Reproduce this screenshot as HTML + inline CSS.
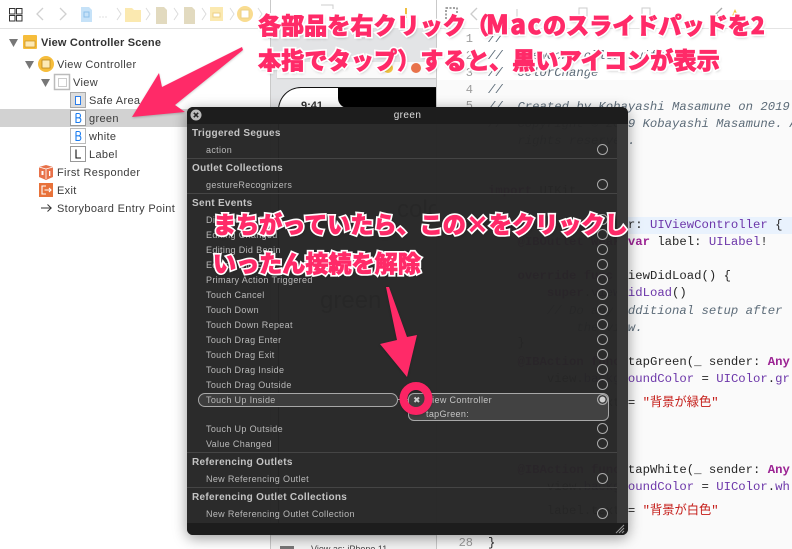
<!DOCTYPE html>
<html><head><meta charset="utf-8">
<style>
html,body{margin:0;padding:0;background:#fff}
#r{position:relative;width:792px;height:549px;overflow:hidden;background:#fff;font-family:"Liberation Sans","Noto Sans CJK JP",sans-serif}
.a{position:absolute;white-space:pre}
.t{position:absolute;white-space:pre;font-size:11px;letter-spacing:.34px;color:#3c3c3c;line-height:14px}
.c{position:absolute;white-space:pre;font-family:"Liberation Mono","Noto Sans CJK JP",monospace;font-size:12.28px;line-height:16px;color:#262626;left:488px}
.n{position:absolute;font-family:"Liberation Mono",monospace;font-size:12px;line-height:16px;color:#9c9c9c;right:319px;text-align:right}
.cm{color:#5d6c79;font-style:italic}.p{color:#6c36a9}.k{color:#9b2393;font-weight:bold}.s{color:#c41a16}
.h{position:absolute;left:5px;font-size:10px;font-weight:bold;letter-spacing:.3px;color:#c4c4c4;line-height:12px;white-space:pre}
.i{position:absolute;left:19px;font-size:9px;letter-spacing:.34px;color:#b9b9b9;line-height:12px;white-space:pre}
.d{position:absolute;left:0;width:430px;height:1px;background:#454545}
.o{position:absolute;left:410px;width:9px;height:9px;border:1.3px solid #aaa;border-radius:50%}
.j,.w{position:absolute;white-space:pre;font-family:"Noto Sans CJK JP",sans-serif;font-weight:900;font-size:23.1px;line-height:30px}
.w{color:#fff;-webkit-text-stroke:4px #fff;text-shadow:1px 2px 3px rgba(0,0,0,.28)}
.j{color:#ff2a68;-webkit-text-stroke:.7px #ff2a68}
.m{font-size:26px;letter-spacing:1.5px;margin-left:-3px}
</style></head><body><div id="r">

<!-- left panel -->
<div class="a" style="left:0;top:28px;width:270px;height:521px;background:#fff"></div>
<div class="a" style="left:0;top:28px;width:270px;height:1px;background:#e2e2e2"></div>
<div class="a" style="left:0;top:109px;width:190px;height:18px;background:#d2d2d2"></div>
<div class="a" style="left:270px;top:0;width:1px;height:549px;background:#c9c9c9"></div>

<svg class="a" style="left:0;top:0" width="270" height="225" viewBox="0 0 270 225">
 <g fill="none" stroke="#333" stroke-width="1"><rect x="9.500" y="8.500" width="5.500" height="5.500"/><rect x="16.500" y="8.500" width="5.500" height="5.500"/><rect x="9.500" y="15.500" width="5.500" height="5.500"/><rect x="16.500" y="15.500" width="5.500" height="5.500"/></g>
 <g fill="none" stroke="#d0d0d0" stroke-width="1.300"><path d="M43 8l-6 6 6 6M60 8l6 6-6 6"/></g>
 <path d="M81 7h8l3 3v12H81z" fill="#c6e2f8"/><rect x="84" y="12" width="5" height="5" fill="none" stroke="#8cc0ea"/>
 <g fill="#ccc"><circle cx="100" cy="17" r=".6"/><circle cx="103" cy="17" r=".6"/><circle cx="106" cy="17" r=".6"/></g>
 <g fill="none" stroke="#dcdcdc" stroke-width="1"><path d="M117 8l4 6-4 6M146 8l4 6-4 6M174 8l4 6-4 6M202 8l4 6-4 6M230 8l4 6-4 6M258 8l4 6-4 6"/></g>
 <path d="M125 8h7l2 2h7v12h-16z" fill="#fbe9b0"/>
 <path d="M156 7h8l3 3v14h-11z" fill="#e2dabf"/><path d="M184 7h8l3 3v14h-11z" fill="#e2dabf"/>
 <rect x="210" y="7" width="13" height="14" fill="#fbe9b0"/><rect x="213" y="13" width="7" height="4" fill="#fff" stroke="#ecd084"/>
 <circle cx="245" cy="14" r="8" fill="#f9dc90"/><rect x="241" y="10" width="8" height="8" fill="#fff" stroke="#ecd084"/>
 <g fill="#777"><path d="M9 39h9l-4.500 8zM25 61h9l-4.500 8zM41 79h9l-4.500 8z"/></g>
 <rect x="23" y="35" width="14" height="14" rx="1" fill="#f6bd3b"/><rect x="25" y="41" width="10" height="6" fill="#fde9b4" stroke="#c98f1d" stroke-width=".7"/>
 <circle cx="46" cy="64" r="8" fill="#f6bd3b"/><rect x="42" y="60" width="8" height="8" fill="#fde9b4" stroke="#b9861d" stroke-width=".8"/>
 <rect x="54.500" y="74.500" width="15" height="15" fill="#fff" stroke="#bbb" stroke-width="1.500"/><rect x="58.500" y="78.500" width="8" height="8" fill="#fff" stroke="#aaa" stroke-width=".6"/>
 <rect x="70.500" y="92.500" width="15" height="15" fill="#ddd" stroke="#aaa"/><rect x="75.500" y="96.500" width="5" height="8" fill="#fff" stroke="#2b7de9"/>
 <rect x="70.500" y="110.500" width="15" height="15" fill="#fff" stroke="#999"/>
 <rect x="70.500" y="128.500" width="15" height="15" fill="#fff" stroke="#bbb"/>
 <rect x="70.500" y="146.500" width="15" height="15" fill="#fff" stroke="#999"/>
 <path d="M76 113.500v9h2.600c3 0 3-4.700 0-4.700H76m2.600 0c2.500 0 2.500-4.300 0-4.300H76M76 131.500v9h2.600c3 0 3-4.700 0-4.700H76m2.600 0c2.500 0 2.500-4.300 0-4.300H76" fill="none" stroke="#1a7cf0" stroke-width="1.100"/>
 <path d="M76 149.500v8.500h5" fill="none" stroke="#111" stroke-width="1.100"/>
 <path d="M39 167l7-2 7 2v10l-7 3-7-3z" fill="#e8724a"/><path d="M46 169v10M39 167l7 2 7-2" stroke="#fff" fill="none" stroke-width=".8"/><rect x="49" y="171" width="1.300" height="5" fill="#fff"/><rect x="41.500" y="171" width="2" height="4" fill="#fff"/>
 <rect x="39" y="183" width="14" height="14" fill="#e8723a"/><path d="M46 186h-4v8h4M44.500 190h6.500M49 188l2 2-2 2" fill="none" stroke="#fff" stroke-width="1.100"/>
 <path d="M41 208h10M47.500 204.500l3.700 3.500-3.700 3.500" fill="none" stroke="#333" stroke-width="1"/>
</svg>

<div class="t" style="left:41px;top:36px;font-weight:bold;letter-spacing:.2px;color:#333">View Controller Scene</div>
<div class="t" style="left:57px;top:58px">View Controller</div>
<div class="t" style="left:73px;top:76px">View</div>
<div class="t" style="left:89px;top:94px">Safe Area</div>
<div class="t" style="left:89px;top:112px">green</div>
<div class="t" style="left:89px;top:130px">white</div>
<div class="t" style="left:89px;top:148px">Label</div>
<div class="t" style="left:57px;top:166px">First Responder</div>
<div class="t" style="left:57px;top:184px">Exit</div>
<div class="t" style="left:57px;top:202px">Storyboard Entry Point</div>

<!-- canvas -->
<div class="a" style="left:271px;top:28px;width:165px;height:521px;background:#e3e4e6"></div>
<div class="a" style="left:271px;top:0;width:165px;height:28px;background:#fff"></div>
<svg class="a" style="left:271px;top:0" width="165" height="28" viewBox="0 0 165 28">
 <path d="M50 5h12v4" fill="none" stroke="#ccc"/>
 <path d="M135 8v10" stroke="#f0c040" stroke-width="2"/>
</svg>
<div class="a" style="left:277px;top:62px;width:159px;height:16px;background:#fafafa;box-shadow:0 1px 1px #ccc"></div>
<div class="a" style="left:279px;top:88px;width:157px;height:440px;background:#fff;border-radius:22px 0 0 0;box-shadow:0 0 0 1px #111"></div>
<div class="a" style="left:338px;top:88px;width:98px;height:20px;background:#000;border-radius:0 0 0 10px"></div>
<div class="a" style="left:301px;top:100px;font-size:11px;font-weight:bold;color:#333;line-height:13px">9:41</div>
<div class="a" style="left:383px;top:63px;width:10px;height:10px;border-radius:50%;background:#f4c542"></div>
<div class="a" style="left:411px;top:63px;width:10px;height:10px;border-radius:50%;background:#e8724a"></div>
<div class="a" style="left:397px;top:196px;font-size:24px;color:#555;line-height:28px">colorChange</div>
<div class="a" style="left:320px;top:287px;font-size:24px;color:#555;line-height:28px">green</div>
<div class="a" style="left:271px;top:536px;width:165px;height:13px;background:#f4f4f4"></div>
<div class="a" style="left:280px;top:546px;width:14px;height:3px;background:#777"></div>
<div class="a" style="left:311px;top:544px;font-size:9px;color:#444;line-height:10px">View as: iPhone 11</div>
<div class="a" style="left:436px;top:0;width:1px;height:549px;background:#c9c9c9"></div>

<!-- code -->
<div class="a" style="left:437px;top:0;width:355px;height:80px;background:#fff"></div>
<div class="a" style="left:437px;top:80px;width:355px;height:469px;background:#fafafa"></div>
<div class="a" style="left:437px;top:217px;width:355px;height:17px;background:#e9f2fd"></div>
<svg class="a" style="left:437px;top:0" width="355" height="28" viewBox="0 0 355 28">
 <path d="M9 8h11v12H9z" fill="none" stroke="#444" stroke-dasharray="2 1.500"/>
 <path d="M40 8l-6 6 6 6" fill="none" stroke="#ccc" stroke-width="1.300"/>
 <path d="M80 9v10M142 8h8v11h-8zM205 8h8v11h-8z" fill="none" stroke="#ccc"/>
 <path d="M285 8l-6 6 6 6" fill="none" stroke="#aaa" stroke-width="1.300"/>
 <path d="M298 9l4 9h-8z" fill="#f4c542"/>
</svg>
<div class="a" style="left:437px;top:28px;width:355px;height:1px;background:#e4e4e4"></div>

<div class="n" style="top:31px">1</div><div class="n" style="top:48px">2</div><div class="n" style="top:65px">3</div><div class="n" style="top:82px">4</div><div class="n" style="top:98px">5</div>
<div class="n" style="top:535px">28</div>

<div class="c cm" style="top:31px">//</div>
<div class="c cm" style="top:48px">//  ViewController.swift</div>
<div class="c cm" style="top:65px">//  colorChange</div>
<div class="c cm" style="top:82px">//</div>
<div class="c cm" style="top:99px">//  Created by Kobayashi Masamune on 2019</div>
<div class="c cm" style="top:116px">//  Copyright © 2019 Kobayashi Masamune. All</div>
<div class="c cm" style="top:133px">    rights reserved.</div>
<div class="c" style="top:183px"><span class="k">import</span> UIKit</div>
<div class="c" style="top:217px"><span class="k">class</span> ViewController: <span class="p">UIViewController</span> {</div>
<div class="c" style="top:234px">    <span class="k">@IBOutlet weak var</span> label: <span class="p">UILabel</span>!</div>
<div class="c" style="top:268px">    <span class="k">override func</span> viewDidLoad() {</div>
<div class="c" style="top:285px">        <span class="k">super</span>.<span class="p">viewDidLoad</span>()</div>
<div class="c cm" style="top:303px">        // Do any additional setup after</div>
<div class="c cm" style="top:320px">            the view.</div>
<div class="c" style="top:335px">    }</div>
<div class="c" style="top:354px">    <span class="k">@IBAction func</span> tapGreen(_ sender: <span class="k">Any</span></div>
<div class="c" style="top:371px">        view.<span class="p">backgroundColor</span> = <span class="p">UIColor</span>.<span class="p">gr</span></div>
<div class="c" style="top:395px">        label.text = <span class="s">"背景が緑色"</span></div>
<div class="c" style="top:462px">    <span class="k">@IBAction func</span> tapWhite(_ sender: <span class="k">Any</span></div>
<div class="c" style="top:479px">        view.<span class="p">backgroundColor</span> = <span class="p">UIColor</span>.<span class="p">wh</span></div>
<div class="c" style="top:503px">        label.text = <span class="s">"背景が白色"</span></div>
<div class="c" style="top:535px">}</div>

<!-- inspector panel -->
<div class="a" style="left:187px;top:107px;width:441px;height:428px;border-radius:6px;background:rgba(38,38,38,.975);box-shadow:0 3px 14px rgba(0,0,0,.4);overflow:hidden">
 <div class="a" style="left:0;top:0;width:441px;height:17px;background:#1d1d1d"></div>
 <div class="a" style="left:430px;top:17px;width:11px;height:399px;background:#393939"></div>
 <div class="a" style="left:0;top:416px;width:441px;height:12px;background:#1d1d1d"></div>
 <svg class="a" style="left:3px;top:2px" width="12" height="12" viewBox="0 0 12 12"><circle cx="6" cy="6" r="5.500" fill="#bbb"/><path d="M3.800 3.800l4.400 4.400M8.200 3.800l-4.400 4.400" stroke="#222" stroke-width="1.500"/></svg>
 <div class="a" style="left:0;width:441px;top:1px;text-align:center;font-size:10px;letter-spacing:.4px;color:#ddd;line-height:15px">green</div>
 <svg class="a" style="left:427px;top:417px" width="12" height="10" viewBox="0 0 12 10"><path d="M2 9l8-8M5 9l5-5M8 9l2-2" stroke="#999" fill="none"/></svg>

 <div class="h" style="top:21px">Triggered Segues</div>
 <div class="i" style="top:37px">action</div>
 <div class="d" style="top:51px"></div>
 <div class="h" style="top:56px">Outlet Collections</div>
 <div class="i" style="top:72px">gestureRecognizers</div>
 <div class="d" style="top:86px"></div>
 <div class="h" style="top:91px">Sent Events</div>
 <div class="i" style="top:107px">Did End On Exit</div>
 <div class="i" style="top:122px">Editing Changed</div>
 <div class="i" style="top:137px">Editing Did Begin</div>
 <div class="i" style="top:152px">Editing Did End</div>
 <div class="i" style="top:167px">Primary Action Triggered</div>
 <div class="i" style="top:182px">Touch Cancel</div>
 <div class="i" style="top:197px">Touch Down</div>
 <div class="i" style="top:212px">Touch Down Repeat</div>
 <div class="i" style="top:227px">Touch Drag Enter</div>
 <div class="i" style="top:242px">Touch Drag Exit</div>
 <div class="i" style="top:257px">Touch Drag Inside</div>
 <div class="i" style="top:272px">Touch Drag Outside</div>

 <div class="a" style="left:11px;top:286px;width:198px;height:12px;border:1px solid #a8a8a8;border-radius:7px;background:#3d3d3d"></div>
 <div class="i" style="top:287px">Touch Up Inside</div>
 <div class="a" style="left:211px;top:292px;width:10px;height:1px;background:#aaa"></div>
 <div class="a" style="left:221px;top:286px;width:199px;height:26px;border:1px solid #a8a8a8;border-radius:6px;background:#424242"></div>
 <div class="i" style="left:239px;top:287px;color:#c4c4c4">View Controller</div>
 <div class="i" style="left:239px;top:301px;color:#c4c4c4">tapGreen:</div>

 <div class="i" style="top:316px">Touch Up Outside</div>
 <div class="i" style="top:331px">Value Changed</div>
 <div class="d" style="top:345px"></div>
 <div class="h" style="top:350px">Referencing Outlets</div>
 <div class="i" style="top:366px">New Referencing Outlet</div>
 <div class="d" style="top:380px"></div>
 <div class="h" style="top:385px">Referencing Outlet Collections</div>
 <div class="i" style="top:401px">New Referencing Outlet Collection</div>

 <div class="o" style="top:37px"></div><div class="o" style="top:72px"></div>
 <div class="o" style="top:107px"></div><div class="o" style="top:122px"></div><div class="o" style="top:137px"></div><div class="o" style="top:152px"></div><div class="o" style="top:167px"></div><div class="o" style="top:182px"></div><div class="o" style="top:197px"></div><div class="o" style="top:212px"></div><div class="o" style="top:227px"></div><div class="o" style="top:242px"></div><div class="o" style="top:257px"></div><div class="o" style="top:272px"></div>
 <div class="o" style="top:287px;box-shadow:inset 0 0 0 1.500px #3a3a3a;background:#cfcfcf"></div>
 <div class="o" style="top:316px"></div><div class="o" style="top:331px"></div><div class="o" style="top:366px"></div><div class="o" style="top:401px"></div>
</div>

<!-- arrows & ring -->
<svg class="a" style="left:0;top:0;filter:drop-shadow(0 1px 1px rgba(0,0,0,.2))" width="792" height="549" viewBox="0 0 792 549">
 <path d="M242 47L243 50L175 105L185 112L132 117L159 73L162 87Z" fill="#ff2a68"/>
 <path d="M386 287L389 287L407 337L417 335L407 377L380 344L397 340Z" fill="#ff2a68"/>
 <circle cx="416" cy="398.500" r="12.500" fill="none" stroke="#fb2464" stroke-width="8"/>
 <path d="M414.500 397.500l4.500 4.500M419 397.500l-4.500 4.500" stroke="#ccc" stroke-width="2"/>
</svg>

<!-- annotations -->
<div class="w" style="left:258px;top:9px">各部品を右クリック（<span class="m">Mac</span>のスライドパッドを2</div>
<div class="w" style="left:258px;top:44px;letter-spacing:.1px">本指でタップ）すると、黒いアイコンが表示</div>
<div class="w" style="left:213px;top:208px">まちがっていたら、この×をクリックし</div>
<div class="w" style="left:213px;top:247px">いったん接続を解除</div>
<div class="j" style="left:258px;top:9px">各部品を右クリック（<span class="m">Mac</span>のスライドパッドを2</div>
<div class="j" style="left:258px;top:44px;letter-spacing:.1px">本指でタップ）すると、黒いアイコンが表示</div>
<div class="j" style="left:213px;top:208px">まちがっていたら、この×をクリックし</div>
<div class="j" style="left:213px;top:247px">いったん接続を解除</div>

</div></body></html>
